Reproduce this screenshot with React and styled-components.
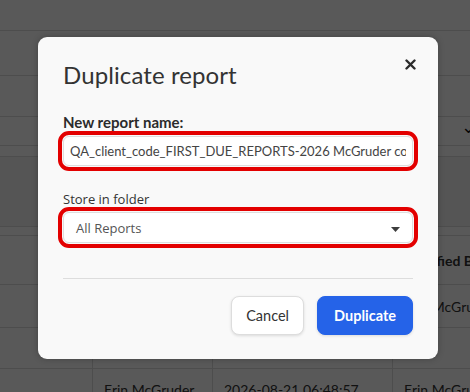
import React from 'react'
import styled, { createGlobalStyle } from 'styled-components'

const GlobalStyle = createGlobalStyle`
  html, body {
    margin: 0;
    padding: 0;
  }
  body {
    font-family: Lato, "Open Sans", sans-serif;
    background: #ffffff;
  }
`

const rows = [
  { h: 31 },
  { h: 45 },
  { h: 41 },
  { h: 29, chevron: true },
  { h: 11 },
  { h: 70, shaded: true },
  { h: 9 }
]

const tableRows = [
  { h: 49, head: true, cells: ['', '', '', 'Modified By'] },
  { h: 43, cells: ['', '', '', 'Erin McGruder'] },
  { h: 41, cells: ['', '', '', ''] },
  { h: 42, cells: ['', 'Erin McGruder', '2026-08-21 06:48:57', 'Erin McGruder'] }
]

function App() {
  return (
    <>
      <GlobalStyle />
      <Screen>
        <Page>
          {rows.map((r, i) => (
            <Bar key={i} $h={r.h} $shaded={r.shaded}>
              {r.chevron && <Chevron>⌄</Chevron>}
            </Bar>
          ))}
          {tableRows.map((r, i) => (
            <TableRow key={'t' + i} $h={r.h}>
              {r.cells.map((c, j) => (
                <Cell key={j} $head={r.head}>{c}</Cell>
              ))}
            </TableRow>
          ))}
        </Page>

        <Overlay>
          <Modal>
            <Header>
              <Title>Duplicate report</Title>
              <Close aria-label="Close">
                <svg width="11" height="11" viewBox="0 0 11 11">
                  <path d="M1.5 1.5 L9.5 9.5 M9.5 1.5 L1.5 9.5" stroke="#2b2b2b" strokeWidth="2.4" strokeLinecap="round" />
                </svg>
              </Close>
            </Header>

            <Field>
              <Label>New report name:</Label>
              <Highlight>
                <Input readOnly value="QA_client_code_FIRST_DUE_REPORTS-2026 McGruder copy" />
              </Highlight>
            </Field>

            <Field>
              <SmallLabel>Store in folder</SmallLabel>
              <Highlight>
                <Select>
                  <span>All Reports</span>
                  <svg width="9" height="5" viewBox="0 0 9 5">
                    <path d="M0 0 L9 0 L4.5 5 Z" fill="#3d3d3d" />
                  </svg>
                </Select>
              </Highlight>
            </Field>

            <Divider />

            <Footer>
              <Button>Cancel</Button>
              <Button $primary>Duplicate</Button>
            </Footer>
          </Modal>
        </Overlay>
      </Screen>
    </>
  )
}

export default App

const Screen = styled.div`
  position: relative;
  width: 470px;
  height: 392px;
  overflow: hidden;
`

const Page = styled.div`
  display: flex;
  flex-direction: column;
  width: 100%;
`

const Bar = styled.div`
  height: ${p => p.$h}px;
  flex-shrink: 0;
  box-sizing: border-box;
  border-bottom: 1px solid #dcdcdc;
  background: ${p => (p.$shaded ? '#f2f2f2' : '#ffffff')};
  display: flex;
  align-items: center;
  justify-content: flex-end;
`

const Chevron = styled.span`
  font-size: 18px;
  color: #111;
  margin-right: -6px;
  line-height: 1;
  margin-top: -10px;
`

const TableRow = styled.div`
  height: ${p => p.$h}px;
  flex-shrink: 0;
  box-sizing: border-box;
  border-bottom: 1px solid #dcdcdc;
  display: grid;
  grid-template-columns: 92px 120px 180px 1fr;
`

const Cell = styled.div`
  border-left: 1px solid #dcdcdc;
  padding: 0 11px;
  display: flex;
  align-items: center;
  font-size: 14px;
  font-weight: ${p => (p.$head ? 700 : 400)};
  color: #333;
  white-space: nowrap;
  overflow: hidden;
  &:first-child {
    border-left: none;
  }
`

const Overlay = styled.div`
  position: absolute;
  inset: 0;
  background: rgba(0, 0, 0, 0.65);
  display: flex;
  align-items: flex-start;
  padding: 37px 0 0 38px;
  box-sizing: border-box;
`

const Modal = styled.div`
  width: 400px;
  box-sizing: border-box;
  background: #f9f9f9;
  border-radius: 9px;
  padding: 23px 25px 24px 25px;
  box-shadow: 0 0 6px rgba(0, 0, 0, 0.25);
  display: flex;
  flex-direction: column;
`

const Header = styled.div`
  display: flex;
  justify-content: space-between;
  align-items: flex-start;
`

const Title = styled.h2`
  margin: 0;
  font-size: 24px;
  line-height: 29px;
  font-weight: 400;
  color: #333;
  letter-spacing: 0.1px;
`

const Close = styled.button`
  border: none;
  background: none;
  padding: 0;
  margin: -4px -5px 0 0;
  width: 16px;
  height: 16px;
  display: flex;
  align-items: center;
  justify-content: center;
`

const Field = styled.div`
  display: flex;
  flex-direction: column;
  margin-top: 24px;
`

const Label = styled.label`
  font-size: 15px;
  line-height: 18px;
  font-weight: 700;
  color: #2b2b2b;
  margin-bottom: 5px;
`

const SmallLabel = styled.label`
  font-family: "Open Sans", sans-serif;
  font-size: 13px;
  line-height: 18px;
  color: #333;
  margin-bottom: 4px;
`

const Highlight = styled.div`
  border-radius: 6px;
  outline: 4px solid #e30000;
  outline-offset: 1.5px;
`

const Input = styled.input`
  display: block;
  width: 100%;
  box-sizing: border-box;
  height: 30px;
  border: 1px solid #dedede;
  border-radius: 6px;
  background: #fff;
  padding: 0 6px;
  font-family: Lato, sans-serif;
  font-size: 13px;
  color: #444;
  outline: none;
`

const Select = styled.div`
  height: 31px;
  box-sizing: border-box;
  border: 1px solid #dedede;
  border-radius: 6px;
  background: #fff;
  padding: 0 12px 0 12px;
  display: flex;
  align-items: center;
  justify-content: space-between;
  font-family: "Open Sans", sans-serif;
  font-size: 13px;
  color: #555;

  svg {
    margin-top: 3px;
  }
`

const Divider = styled.div`
  height: 1px;
  background: #dddddd;
  margin-top: 35px;
`

const Footer = styled.div`
  display: flex;
  justify-content: flex-end;
  gap: 13px;
  margin-top: 17px;
`

const Button = styled.button`
  height: 39px;
  box-sizing: border-box;
  padding: 0 ${p => (p.$primary ? 16 : 14)}px;
  border-radius: 8px;
  font-family: Lato, sans-serif;
  font-size: 14.5px;
  font-weight: ${p => (p.$primary ? 700 : 400)};
  color: ${p => (p.$primary ? '#fff' : '#333')};
  background: ${p => (p.$primary ? '#2563e8' : '#fff')};
  border: 1px solid ${p => (p.$primary ? '#2563e8' : '#dddddd')};
  box-shadow: 0 1px 3px rgba(0, 0, 0, 0.12);
`
